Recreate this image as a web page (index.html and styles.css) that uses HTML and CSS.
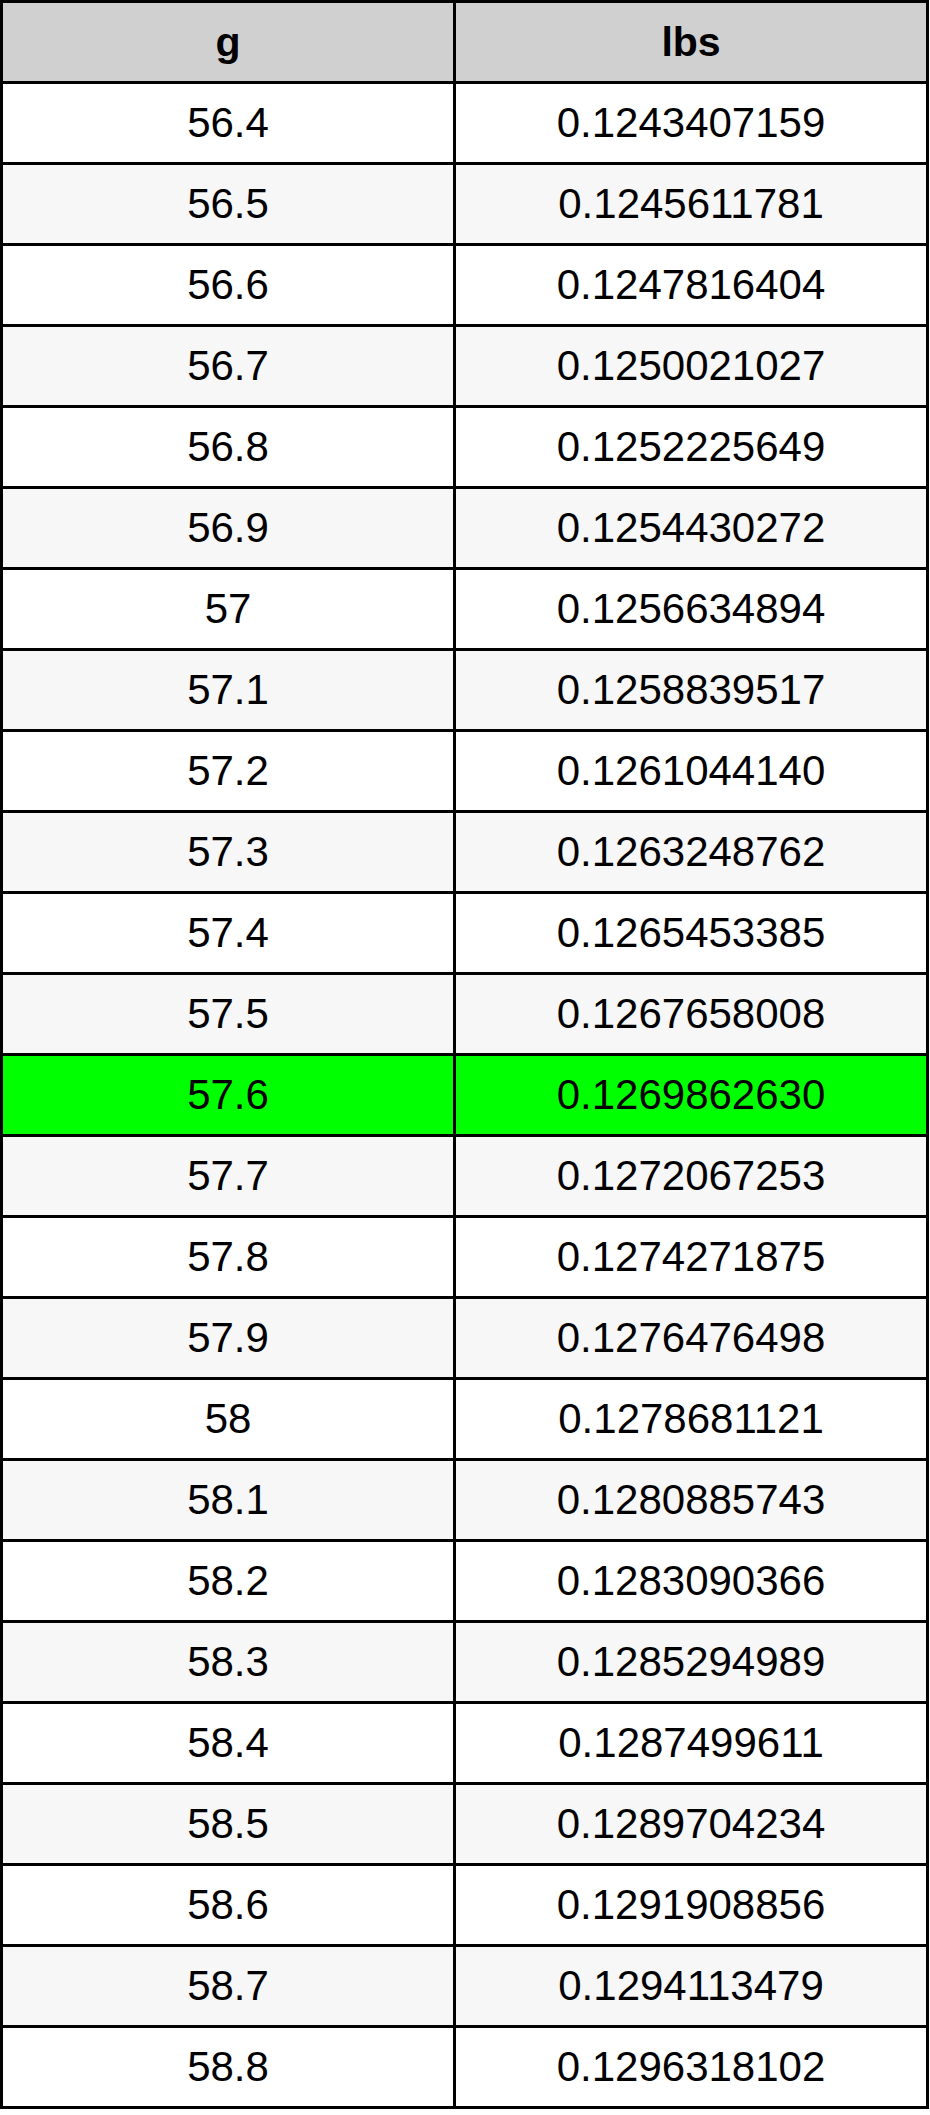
FILE: index.html
```html
<!DOCTYPE html>
<html>
<head>
<meta charset="utf-8">
<link rel="stylesheet" href="styles.css">
</head>
<body>
<table class="conv">
  <colgroup><col class="c1"><col class="c2"></colgroup>
  <thead>
    <tr><th>g</th><th>lbs</th></tr>
  </thead>
  <tbody>
    <tr><td>56.4</td><td>0.1243407159</td></tr>
    <tr><td>56.5</td><td>0.1245611781</td></tr>
    <tr><td>56.6</td><td>0.1247816404</td></tr>
    <tr><td>56.7</td><td>0.1250021027</td></tr>
    <tr><td>56.8</td><td>0.1252225649</td></tr>
    <tr><td>56.9</td><td>0.1254430272</td></tr>
    <tr><td>57</td><td>0.1256634894</td></tr>
    <tr><td>57.1</td><td>0.1258839517</td></tr>
    <tr><td>57.2</td><td>0.1261044140</td></tr>
    <tr><td>57.3</td><td>0.1263248762</td></tr>
    <tr><td>57.4</td><td>0.1265453385</td></tr>
    <tr><td>57.5</td><td>0.1267658008</td></tr>
    <tr class="hl"><td>57.6</td><td>0.1269862630</td></tr>
    <tr><td>57.7</td><td>0.1272067253</td></tr>
    <tr><td>57.8</td><td>0.1274271875</td></tr>
    <tr><td>57.9</td><td>0.1276476498</td></tr>
    <tr><td>58</td><td>0.1278681121</td></tr>
    <tr><td>58.1</td><td>0.1280885743</td></tr>
    <tr><td>58.2</td><td>0.1283090366</td></tr>
    <tr><td>58.3</td><td>0.1285294989</td></tr>
    <tr><td>58.4</td><td>0.1287499611</td></tr>
    <tr><td>58.5</td><td>0.1289704234</td></tr>
    <tr><td>58.6</td><td>0.1291908856</td></tr>
    <tr><td>58.7</td><td>0.1294113479</td></tr>
    <tr><td>58.8</td><td>0.1296318102</td></tr>
  </tbody>
</table>
</body>
</html>
```

FILE: styles.css
```css
html, body {
  margin: 0;
  padding: 0;
  background: #ffffff;
}

.conv {
  table-layout: fixed;
  width: 929px;
  border-collapse: separate;
  border-spacing: 3px;
  background: #000000;
  font-family: "Liberation Sans", Arial, sans-serif;
  font-size: 42px;
  color: #000000;
}

.conv .c1 {
  width: 450px;
}

.conv th,
.conv td {
  height: 78px;
  padding: 0;
  text-align: center;
  vertical-align: middle;
  line-height: 1;
}

.conv th {
  background: #d0d0d0;
  font-weight: bold;
  font-size: 41px;
}

.conv tbody tr:nth-child(odd) td {
  background: #ffffff;
}

.conv tbody tr:nth-child(even) td {
  background: #f7f7f7;
}

.conv tbody tr.hl td {
  background: #00ff00;
}
```
